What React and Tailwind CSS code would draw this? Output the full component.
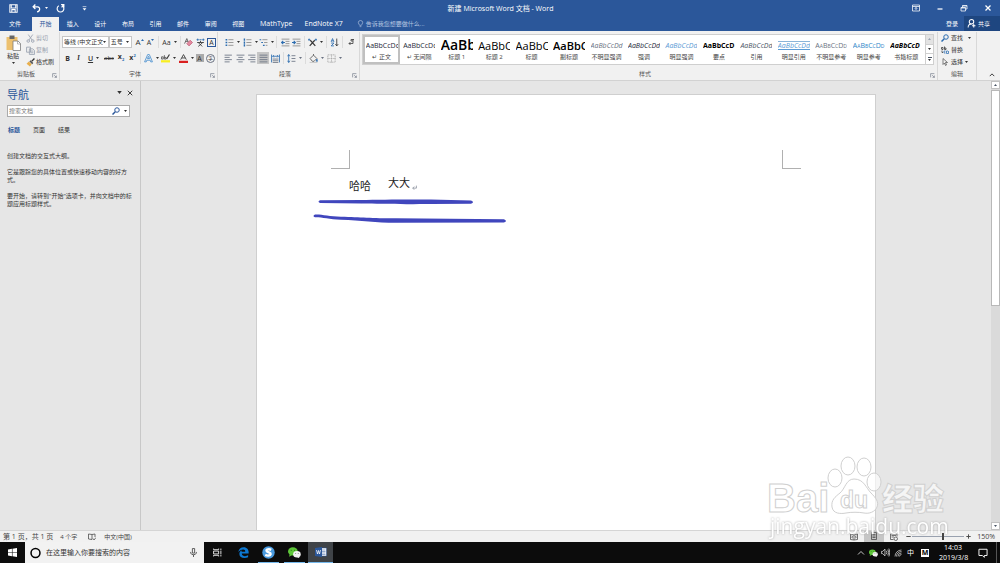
import React, { useState } from 'react';

const tabs = ['插入', '设计', '布局', '引用', '邮件', '审阅', '视图'];

const styleItems = [
  { name: '↵ 正文', preview: 'AaBbCcDd', className: 'text-[7px] text-gray-800' },
  { name: '↵ 无间隔', preview: 'AaBbCcDd', className: 'text-[7px] text-gray-800' },
  { name: '标题 1', preview: 'AaBb', className: 'text-[14px] font-semibold text-black' },
  { name: '标题 2', preview: 'AaBbC', className: 'text-[11px] text-black' },
  { name: '标题', preview: 'AaBbC', className: 'text-[11px] text-black' },
  { name: '副标题', preview: 'AaBbC', className: 'text-[11px] font-semibold text-black' },
  { name: '不明显强调', preview: 'AaBbCcDd', className: 'text-[7px] italic text-gray-500' },
  { name: '强调', preview: 'AaBbCcDd', className: 'text-[7px] italic text-gray-800' },
  { name: '明显强调', preview: 'AaBbCcDd', className: 'text-[7px] italic text-[#5b9bd5]' },
  { name: '要点', preview: 'AaBbCcD', className: 'text-[7px] font-bold text-black' },
  { name: '引用', preview: 'AaBbCcDd', className: 'text-[7px] italic text-gray-600' },
  { name: '明显引用', preview: 'AaBbCcDd', className: 'text-[7px] italic text-[#5b9bd5] underline border-t border-[#8ab4d8]' },
  { name: '不明显参考', preview: 'AaBbCcDd', className: 'text-[7px] text-gray-500 [font-variant:small-caps]' },
  { name: '明显参考', preview: 'AaBbCcDd', className: 'text-[7px] text-[#2e86c8] [font-variant:small-caps]' },
  { name: '书籍标题', preview: 'AaBbCcD', className: 'text-[7px] font-bold italic text-black' },
];

function Icon({ className = 'w-[9px] h-[9px]', children, ...rest }) {
  return (
    <svg
      viewBox="0 0 16 16"
      fill="none"
      stroke="currentColor"
      strokeWidth="1.5"
      className={`block shrink-0 ${className}`}
      {...rest}
    >
      {children}
    </svg>
  );
}

function Caret({ className = 'w-[3px] h-[2px]' }) {
  return (
    <svg viewBox="0 0 6 4" className={`block shrink-0 ${className}`} fill="currentColor">
      <path d="M0 0h6L3 4z" />
    </svg>
  );
}

function Tool({ label, width = 'w-[11px]', caret, active, children }) {
  return (
    <button
      aria-label={label}
      className={`flex h-[12px] shrink-0 items-center justify-center gap-[3px] ${width} ${active ? 'bg-[#c5c5c5]' : ''}`}
    >
      {children}
      {caret && <Caret />}
    </button>
  );
}

function Divider() {
  return <span className="mx-[2px] h-[12px] w-px shrink-0 bg-[#dcdcdc]" />;
}

function Group({ label, width, launcher = true, children }) {
  return (
    <section className={`flex flex-col border-r border-[#d8d8d8] ${width}`}>
      <div className="flex-1">{children}</div>
      <div className="flex h-[11px] items-center pb-px">
        <span className="flex-1 text-center text-[#555]">{label}</span>
        {launcher && (
          <button aria-label={`${label}设置`} className="pt-[3px] pr-[2px] text-gray-500">
            <Icon className="h-[5px] w-[5px]">
              <path d="M2 14V2h12M7 7l7 7M14 8v6H8" strokeWidth="2" />
            </Icon>
          </button>
        )}
      </div>
    </section>
  );
}

function TitleBar() {
  return (
    <header className="flex h-[16px] items-center bg-[#2b579a] text-white">
      <div className="flex flex-1 items-center pl-[9px]">
        <button aria-label="保存">
          <Icon>
            <path d="M1.5 1.5h13v13h-13zM4 2v5h8V2M5 14v-4h6v4" strokeWidth="1.8" />
          </Icon>
        </button>
        <button aria-label="撤消" className="ml-[14px] flex items-center gap-[4px]">
          <Icon>
            <path d="M6 1L2 5l4 4M2 5h8c5 0 5 8-1 9" strokeWidth="2.2" />
          </Icon>
          <Caret />
        </button>
        <button aria-label="恢复" className="ml-[8px]">
          <Icon>
            <path d="M5 3a6 6 0 1 0 6 0M9 1h5v5M13 2l-3 4" strokeWidth="2" />
          </Icon>
        </button>
        <button aria-label="自定义快速访问工具栏" className="ml-[17px]">
          <Icon className="h-[5px] w-[5px]">
            <path d="M2 2h12" strokeWidth="2" />
            <path d="M2 7h12l-6 7z" fill="currentColor" stroke="none" />
          </Icon>
        </button>
      </div>
      <h1 className="text-[7px]">新建 Microsoft Word 文档 - Word</h1>
      <div className="flex flex-1 items-center justify-end gap-[16px] pr-[8px]">
        <button aria-label="功能区显示选项">
          <Icon className="h-[8px] w-[8px]">
            <path d="M1 2h14v12H1zM1 5h14M8 12V7M5.500 9.500L8 7l2.500 2.500" />
          </Icon>
        </button>
        <button aria-label="最小化">
          <Icon className="h-[8px] w-[8px]">
            <path d="M3 10h10" strokeWidth="2.500" />
          </Icon>
        </button>
        <button aria-label="向下还原">
          <Icon className="h-[8px] w-[8px]">
            <path d="M2 7h9v7H2zM5 7V3h9v7h-3M5 4h9M2 8h9" />
          </Icon>
        </button>
        <button aria-label="关闭">
          <Icon className="h-[8px] w-[8px]">
            <path d="M3 3l10 10M13 3L3 13" strokeWidth="2.500" />
          </Icon>
        </button>
      </div>
    </header>
  );
}

function TabBar() {
  return (
    <nav className="flex h-[15px] items-stretch bg-[#2b579a] text-[6px] text-white">
      <button className="w-[32px] pr-[2px]">文件</button>
      <button className="mt-px w-[27px] bg-[#f1f1f1] text-[#2b579a]">开始</button>
      <div className="grid w-[193px] grid-cols-7">
        {tabs.map((tab) => (
          <button key={tab}>{tab}</button>
        ))}
      </div>
      <button className="ml-[8px] text-[7px]">MathType</button>
      <button className="ml-[12px] text-[7px]">EndNote X7</button>
      <button className="ml-[14px] flex items-center gap-[2px] text-[#b4c5e0]">
        <Icon className="h-[8px] w-[7px]">
          <path d="M6 11c0-2-3-3-3-6a5 5 0 0 1 10 0c0 3-3 4-3 6zM6 14h4" />
        </Icon>
        告诉我您想要做什么...
      </button>
      <button className="ml-auto pr-[6px]">登录</button>
      <button className="flex w-[36px] items-center gap-[2px] bg-[#1e4680] pl-[3px]">
        <Icon>
          <circle cx="8" cy="5" r="4" strokeWidth="1.8" />
          <path d="M2 15c0-4 3-6 6-6M12 9v6M9 12h6" strokeWidth="1.8" />
        </Icon>
        共享
      </button>
    </nav>
  );
}

function ClipboardGroup() {
  return (
    <Group label="剪贴板" width="w-[60px]">
      <div className="flex">
        <button className="flex w-[26px] flex-col items-center pt-[3px]">
          <svg viewBox="0 0 30 32" className="h-[16px] w-[15px]">
            <path d="M1 4h22v26H1z" fill="#ecc06f" />
            <path d="M7 1h10v7H7z" fill="#666" />
            <path d="M14 12h10l5 5v14H14z" fill="#fff" stroke="#777" strokeWidth="1.500" />
            <path d="M23 12v6h6" fill="none" stroke="#777" />
          </svg>
          <span className="mt-[2px] mb-[3px]">粘贴</span>
          <Caret />
        </button>
        <div className="flex flex-col">
          <button className="flex h-[12px] items-center gap-[1px] text-gray-400" disabled>
            <Icon>
              <path d="M4 1l7 10M12 1L5 11" />
              <circle cx="4" cy="12.500" r="2.300" />
              <circle cx="12" cy="12.500" r="2.300" />
            </Icon>
            剪切
          </button>
          <button className="flex h-[12px] items-center gap-[1px] text-gray-400" disabled>
            <Icon>
              <path d="M1 2h7v9H1zM6 5h6l3 3v7H6zM8 9h5M8 12h5" />
            </Icon>
            复制
          </button>
          <button className="flex h-[12px] items-center gap-[1px]">
            <Icon>
              <path d="M15 1l-5 5" strokeWidth="2.500" />
              <path d="M8 4l5 5-2 2-5-5z" fill="#555" stroke="none" />
              <path d="M5 6l5 5-3 4-6-5z" fill="#e8ae4a" stroke="none" />
            </Icon>
            格式刷
          </button>
        </div>
      </div>
    </Group>
  );
}

function SelectBox({ label, value, width }) {
  return (
    <label className={`relative flex h-[12px] items-center border border-[#c6c6c6] bg-white ${width}`}>
      <select aria-label={label} className="h-full w-full appearance-none truncate pr-[5px] pl-px text-[6px] outline-none [text-overflow:clip]">
        <option>{value}</option>
      </select>
      <span className="pointer-events-none absolute right-[2px]">
        <Caret />
      </span>
    </label>
  );
}

function FontGroup() {
  return (
    <Group label="字体" width="w-[158px]">
      <div className="flex items-center pt-[4px] pl-[2px]">
        <SelectBox label="字体" value="等线 (中文正文" width="w-[48px]" />
        <SelectBox label="字号" value="五号" width="w-[24px]" />
        <Tool label="增大字号" width="ml-[2px] w-[11px]">
          <span className="text-[8px]">A</span>
          <Caret className="-ml-[3px] mb-[5px] h-[2px] w-[3px] rotate-180 text-[#2b6cb0]" />
        </Tool>
        <Tool label="减小字号">
          <span className="text-[7px]">A</span>
          <Caret className="-ml-[3px] mb-[5px] h-[2px] w-[3px] text-[#2b6cb0]" />
        </Tool>
        <Divider />
        <Tool label="更改大小写" width="w-[17px]" caret>
          <span className="text-[7px]">Aa</span>
        </Tool>
        <Divider />
        <Tool label="清除所有格式">
          <Icon>
            <path d="M1 10L5 1l3 7M3 6h4" stroke="#555" />
            <path d="M11 4l4 4-6 6-4-4z" fill="#e58ba0" stroke="#c4627c" />
          </Icon>
        </Tool>
        <Tool label="拼音指南" width="w-[12px]">
          <Icon>
            <path d="M1 3h4M6 3h4M11 3h4M3 1v4M13 1v4" stroke="#2b6cb0" />
            <path d="M8 5v3M2 8h12M4 8l7 7M12 8l-8 7" />
          </Icon>
        </Tool>
        <Tool label="字符边框">
          <span className="flex h-[9px] w-[9px] items-center justify-center border border-[#2b579a] text-[7px]">A</span>
        </Tool>
      </div>
      <div className="flex items-center pt-[4px] pl-[2px] text-[7px]">
        <Tool label="加粗"><b>B</b></Tool>
        <Tool label="倾斜"><i className="font-serif font-semibold">I</i></Tool>
        <Tool label="下划线" width="w-[19px]" caret><span className="font-semibold underline">U</span></Tool>
        <Tool label="删除线" width="w-[12px]"><s className="text-[6px]">abc</s></Tool>
        <Tool label="下标" width="w-[12px]">
          <span className="font-bold">x<span className="align-sub text-[4px] text-[#2b6cb0]">2</span></span>
        </Tool>
        <Tool label="上标">
          <span className="font-bold">x<span className="align-super text-[4px] text-[#2b6cb0]">2</span></span>
        </Tool>
        <Divider />
        <Tool label="文本效果" width="w-[16px]" caret>
          <Icon>
            <path d="M1 14L6.500 1h3L15 14h-3l-1-3H5l-1 3zM6 8h4L8 4z" stroke="#4a90d0" />
          </Icon>
        </Tool>
        <Tool label="突出显示" width="w-[18px]" caret>
          <Icon>
            <path d="M0 11h16v4H0z" fill="#f8ee20" stroke="none" />
            <path d="M1 9V5h3v4zM6 2v7h3V6H6" strokeWidth="1.200" />
            <path d="M15 1l-5 8" strokeWidth="2" />
          </Icon>
        </Tool>
        <Tool label="字体颜色" width="w-[18px]" caret>
          <Icon>
            <path d="M3 10L8 1l5 9M5 7h6" />
            <path d="M0 12h16v4H0z" fill="#d92020" stroke="none" />
          </Icon>
        </Tool>
        <Tool label="字符底纹" width="w-[9px]">
          <span className="flex h-[8px] w-[8px] items-center justify-center bg-[#aaa]">A</span>
        </Tool>
        <Tool label="带圈字符" width="w-[13px]">
          <span className="flex h-[9px] w-[9px] items-center justify-center rounded-full border border-gray-500 text-[5px]">字</span>
        </Tool>
      </div>
    </Group>
  );
}

function ListIcon({ dots }) {
  return (
    <Icon>
      <path d="M6 3h9M6 8h9M6 13h9" stroke="#888" />
      <path d={dots} stroke="#2b6cb0" strokeWidth="2.500" />
    </Icon>
  );
}

function ParagraphGroup() {
  return (
    <Group label="段落" width="w-[142px]">
      <div className="flex items-center pt-[4px] pl-[5px]">
        <Tool label="项目符号" width="w-[18px]" caret><ListIcon dots="M1 3h3M1 8h3M1 13h3" /></Tool>
        <Tool label="编号" width="w-[18px]" caret><ListIcon dots="M2.500 1v4M2.500 6v4M2.500 11v4" /></Tool>
        <Tool label="多级列表" width="w-[15px]" caret>
          <Icon>
            <path d="M1 3h3M4 8h3M7 13h3" stroke="#2b6cb0" strokeWidth="2" />
            <path d="M6 3h9M9 8h6M12 13h3" stroke="#888" />
          </Icon>
        </Tool>
        <Divider />
        <Tool label="减少缩进量" width="w-[12px]">
          <Icon>
            <path d="M1 2h14M8 6h7M8 10h7M1 14h14" stroke="#888" />
            <path d="M7 8H1M4 5L1 8l3 3" stroke="#2b6cb0" strokeWidth="2" />
          </Icon>
        </Tool>
        <Tool label="增加缩进量">
          <Icon>
            <path d="M1 2h14M8 6h7M8 10h7M1 14h14" stroke="#888" />
            <path d="M0 8h6M3 5l3 3-3 3" stroke="#2b6cb0" strokeWidth="2" />
          </Icon>
        </Tool>
        <Divider />
        <Tool label="中文版式" width="w-[17px]" caret>
          <Icon>
            <path d="M3 14L12 4M13 14L4 4" strokeWidth="2" />
            <path d="M0 3h4M12 3h4M2 1v4M14 1v4" stroke="#2b6cb0" />
          </Icon>
        </Tool>
        <Divider />
        <Tool label="排序">
          <Icon>
            <path d="M2 7L4.500 1 7 7M3 5h3M2 9h5l-5 5h5" stroke="#2b6cb0" />
            <path d="M12 1v13M9.500 11l2.500 3 2.500-3" />
          </Icon>
        </Tool>
        <Divider />
        <Tool label="显示编辑标记">
          <Icon className="h-[8px] w-[8px]">
            <path d="M12 2v9H4M7 8l-3 3 3 3M8 3h6M8 3v3h4" />
          </Icon>
        </Tool>
      </div>
      <div className="flex items-center pt-[4px] pl-[5px] text-gray-500">
        <Tool label="左对齐"><Icon><path d="M1 2h13M1 6h9M1 10h13M1 14h9" /></Icon></Tool>
        <Tool label="居中" width="w-[12px]"><Icon><path d="M1 2h14M4 6h8M1 10h14M4 14h8" /></Icon></Tool>
        <Tool label="右对齐"><Icon><path d="M2 2h13M6 6h9M2 10h13M6 14h9" /></Icon></Tool>
        <Tool label="两端对齐" width="w-[12px]" active><Icon><path d="M1 2h14M1 6h14M1 10h14M1 14h14" /></Icon></Tool>
        <Tool label="分散对齐" width="w-[12px]">
          <Icon>
            <path d="M1 1v14M15 1v14M3 4h10M5 2L3 4l2 2M11 2l2 2-2 2" stroke="#2b6cb0" />
            <path d="M3 9h10M3 12h10M3 15h10" />
          </Icon>
        </Tool>
        <Divider />
        <Tool label="行距" width="w-[17px]" caret>
          <Icon>
            <path d="M3 1v14M1 4l2-3 2 3M1 12l2 3 2-3" stroke="#2b6cb0" />
            <path d="M8 3h7M8 8h7M8 13h7" />
          </Icon>
        </Tool>
        <Divider />
        <Tool label="底纹" width="w-[17px]" caret>
          <Icon>
            <path d="M2 8l6-6 6 6-5 5H6zM8 2V0" stroke="#555" />
            <path d="M14 9l1 4h-2z" stroke="#2b6cb0" />
            <path d="M1 15h14" strokeWidth="2" stroke="#ccc" />
          </Icon>
        </Tool>
        <Tool label="边框" width="w-[18px]" caret>
          <Icon><path d="M1.500 1.500h13v13h-13zM8 1v14M1 8h14" stroke="#aaa" strokeDasharray="2 1" /></Icon>
        </Tool>
      </div>
    </Group>
  );
}

function StylesGroup() {
  const [selected, setSelected] = useState(0);

  return (
    <Group label="样式" width="min-w-0 flex-1">
      <div className="mt-[2px] mr-[3px] ml-[2px] flex h-[31px] border border-[#cfcfcf] bg-white">
        <div className="grid min-w-0 flex-1 grid-cols-15">
          {styleItems.map((item, i) => (
            <button
              key={item.name}
              onClick={() => setSelected(i)}
              className={`flex min-w-0 flex-col items-center border-2 ${selected === i ? 'border-[#c0c0c0]' : 'border-transparent'}`}
            >
              <span className="flex h-[16px] w-[32px] items-center overflow-hidden">
                <span className={`whitespace-nowrap ${item.className}`}>{item.preview}</span>
              </span>
              <span className="mt-px whitespace-nowrap text-[#444]">{item.name}</span>
            </button>
          ))}
        </div>
        <div className="grid w-[8px] grid-rows-3 divide-y divide-[#cfcfcf] border-l border-[#cfcfcf]">
          <button aria-label="上一行" className="flex items-center justify-center bg-[#e3e3e3] text-gray-400">
            <Caret className="h-[2px] w-[3px] rotate-180" />
          </button>
          <button aria-label="下一行" className="flex items-center justify-center"><Caret /></button>
          <button aria-label="其他" className="flex flex-col items-center justify-center gap-px">
            <span className="h-px w-[4px] bg-gray-600" />
            <Caret />
          </button>
        </div>
      </div>
    </Group>
  );
}

function EditGroup() {
  return (
    <Group label="编辑" width="w-[39px]" launcher={false}>
      <div className="flex flex-col items-start pl-[3px]">
        <button className="flex h-[12px] items-center gap-[2px]">
          <Icon className="h-[8px] w-[8px] text-[#2b6cb0]">
            <circle cx="10" cy="6" r="4.500" strokeWidth="2" />
            <path d="M6.500 9.500L1 15" strokeWidth="3" />
          </Icon>
          查找
          <span className="pl-[3px]"><Caret /></span>
        </button>
        <button className="flex h-[12px] items-center gap-[2px]">
          <Icon className="h-[8px] w-[8px]">
            <path d="M1 6V3h3v4H1M7 1v6h3V4H7" />
            <path d="M9 10H6v4h3M14 10h-3v5h4v-5" stroke="#2b6cb0" />
            <path d="M2 9v4h2" />
          </Icon>
          替换
        </button>
        <button className="flex h-[12px] items-center gap-[2px]">
          <Icon className="h-[8px] w-[8px]">
            <path d="M4 1v12l3-3 2 5 2-1-2-5h4z" strokeWidth="1.200" />
          </Icon>
          选择
          <Caret />
        </button>
      </div>
    </Group>
  );
}

function Ribbon() {
  return (
    <div className="flex h-[50px] border-b border-[#d2d2d2] bg-[#f1f1f1] pt-px text-[6px] text-[#333]">
      <ClipboardGroup />
      <FontGroup />
      <ParagraphGroup />
      <StylesGroup />
      <EditGroup />
      <button aria-label="折叠功能区" className="w-[23px] self-end pb-[2px] pl-[12px]">
        <Icon className="h-[6px] w-[6px]"><path d="M2 11l6-6 6 6" strokeWidth="2.500" /></Icon>
      </button>
    </div>
  );
}

function NavigationPane() {
  return (
    <aside className="w-[141px] shrink-0 border-r border-[#c8c8c8] px-[7px] pt-[6px] text-[6px] text-[#333]">
      <div className="flex h-[14px] items-center">
        <h2 className="flex-1 text-[11px] text-[#2b579a]">导航</h2>
        <div className="flex items-center gap-[5px] pb-[3px]">
          <button aria-label="任务窗格选项"><Caret className="h-[3px] w-[5px]" /></button>
          <button aria-label="关闭导航">
            <Icon className="h-[6px] w-[6px]"><path d="M2 2l12 12M14 2L2 14" strokeWidth="2.500" /></Icon>
          </button>
        </div>
      </div>
      <div className="mt-[4px] mr-[3px] flex h-[12px] items-center border border-[#ababab] bg-white pr-[2px]">
        <input
          aria-label="搜索文档"
          placeholder="搜索文档"
          className="h-full min-w-0 flex-1 pl-px outline-none placeholder:text-[#777]"
        />
        <button aria-label="搜索" className="text-[#2b579a]">
          <Icon className="h-[8px] w-[8px]">
            <circle cx="10" cy="6" r="4.500" strokeWidth="2" />
            <path d="M6.500 9.500L1 15" strokeWidth="3" />
          </Icon>
        </button>
        <button aria-label="搜索选项" className="pl-[4px]"><Caret /></button>
      </div>
      <div className="mt-[10px] flex gap-[13px] pl-px">
        <button className="font-bold text-[#2b579a]">标题</button>
        <button>页面</button>
        <button>结果</button>
      </div>
      <div className="mt-[19px] flex flex-col gap-[8px] leading-[8px]">
        <p>创建文档的交互式大纲。</p>
        <p>它是跟踪您的具体位置或快速移动内容的好方式。</p>
        <p>要开始，请转到"开始"选项卡，并向文档中的标题应用标题样式。</p>
      </div>
    </aside>
  );
}

function DocumentPage() {
  return (
    <div className="relative mx-auto mt-[13px] w-[620px] max-w-full flex-1 border border-b-0 border-[#cfcfcf] bg-white">
      <div className="flex justify-between px-[74px] pt-[55px]">
        <span className="h-[19px] w-[19px] border-r border-b border-[#b0b0b0]" />
        <span className="h-[19px] w-[19px] border-b border-l border-[#b0b0b0]" />
      </div>
      <p className="flex px-[92px] pt-[8px] text-[11px] text-[#222]">
        <span className="mt-[3px]">哈哈</span>
        <span className="ml-[17px]">大大</span>
        <Icon className="mt-[8px] ml-[2px] h-[5px] w-[5px] text-gray-500">
          <path d="M14 2v8H3M7 5l-5 5 5 5" strokeWidth="2" />
        </Icon>
      </p>
      {/* pen strokes drawn over the text */}
      <svg viewBox="0 0 200 30" className="absolute top-[102px] left-[54px] h-[30px] w-[200px]" fill="#4046bd">
        <path d="M9 3.200L50 3C70 2.500 105 2.200 120 2.600L160 3.400Q164 5 160 6.800L120 7C100 7.300 70 7.200 50 6.600L9 6Q6 4.600 9 3.200z" />
        <path d="M4 17.500C10 17 18 19.500 30 19.700C50 20 60 21.300 85 21.300L193 22.200Q197 24 193 25.600L85 25.800C65 25.800 50 23.500 30 22.800C18 22.300 10 20 4 20.300Q1 19 4 17.500z" />
      </svg>
    </div>
  );
}

function ScrollBar() {
  return (
    <div className="flex w-[9px] shrink-0 flex-col bg-[#dadada] text-gray-600">
      <button aria-label="向上滚动" className="flex h-[8px] items-center justify-center border border-[#c2c2c2] bg-white">
        <Caret className="h-[2px] w-[3px] rotate-180" />
      </button>
      <div className="flex-1 pt-px">
        <div className="h-1/2 border border-[#b8b8b8] bg-white" />
      </div>
      <button aria-label="向下滚动" className="flex h-[8px] items-center justify-center border border-[#c2c2c2] bg-white">
        <Caret />
      </button>
    </div>
  );
}

function StatusBar() {
  const [zoom, setZoom] = useState(60);

  return (
    <footer className="flex h-[12px] items-center border-t border-[#d5d5d5] bg-[#f1f1f1] pr-[5px] pl-[3px] text-[6px] text-[#444]">
      <span className="text-[7px]">第 1 页，共 1 页</span>
      <span className="ml-[7px]">4 个字</span>
      <button aria-label="校对" className="ml-[11px]">
        <Icon className="h-[8px] w-[8px]">
          <path d="M8 3L1 2v10l7 1V3l6-1v6M10 11l2 3 4-5" />
        </Icon>
      </button>
      <span className="ml-[8px]">中文(中国)</span>
      <div className="ml-auto flex items-center self-stretch">
        <button aria-label="阅读视图" className="flex w-[20px] justify-center">
          <Icon className="h-[8px] w-[8px]"><path d="M8 4L1 2v11l7 1 7-1V2zM8 4v10M3 6l3 1M3 9l3 1M10 7l3-1M10 10l3-1" /></Icon>
        </button>
        <button aria-label="页面视图" className="flex w-[20px] justify-center self-stretch bg-[#c6c6c6] pt-px">
          <Icon className="h-[8px] w-[8px]"><path d="M3 1h10v14H3zM5 5h6M5 8h6M5 11h6" /></Icon>
        </button>
        <button aria-label="Web 版式视图" className="flex w-[20px] justify-center">
          <Icon className="h-[8px] w-[8px]"><path d="M7 13H1V2h13v5M3 5h9M3 8h5" /><circle cx="11.500" cy="11.500" r="3.500" /></Icon>
        </button>
        <button aria-label="缩小" className="flex w-[8px] justify-center">
          <Icon className="h-[5px] w-[5px]"><path d="M1 8h14" strokeWidth="3" /></Icon>
        </button>
        <input
          type="range"
          aria-label="缩放"
          value={zoom}
          onChange={(e) => setZoom(e.target.value)}
          className="h-px w-[52px] appearance-none bg-gray-400 [&::-webkit-slider-thumb]:h-[7px] [&::-webkit-slider-thumb]:w-[2px] [&::-webkit-slider-thumb]:appearance-none [&::-webkit-slider-thumb]:bg-[#444]"
        />
        <button aria-label="放大" className="flex w-[8px] justify-center">
          <Icon className="h-[5px] w-[5px]"><path d="M1 8h14M8 1v14" strokeWidth="3" /></Icon>
        </button>
      </div>
      <span className="ml-[5px] text-[7px]">150%</span>
    </footer>
  );
}

function WeChatIcon({ className }) {
  return (
    <svg viewBox="0 0 24 20" className={`block ${className}`}>
      <ellipse cx="9" cy="8" rx="9" ry="7.500" fill="#5ec639" />
      <path d="M3 13l-1 5 5-3z" fill="#5ec639" />
      <ellipse cx="16.500" cy="13" rx="7" ry="6" fill="#f2f2f2" />
      <path d="M20 17l1 3-4-1z" fill="#f2f2f2" />
      <path d="M6 5v2M12 5v2" stroke="#246b10" strokeWidth="1.500" />
      <path d="M14 11v1.500M19 11v1.500" stroke="#555" strokeWidth="1.300" />
    </svg>
  );
}

function TaskBar() {
  return (
    <div className="flex h-[21px] items-stretch bg-[#0c0c0c] text-white">
      <button aria-label="开始菜单" className="flex w-[25px] items-center justify-center">
        <svg viewBox="0 0 16 16" className="h-[9px] w-[9px]" fill="#fff">
          <path d="M0 2.500l7-1v6H0zM8 1.300L16 0v7.500H8zM0 8.500h7v6l-7-1zM8 8.500h8V16l-8-1.300z" />
        </svg>
      </button>
      <div className="flex w-[179px] items-center gap-[5px] bg-[#f2f2f2] pr-[6px] pl-[5px] text-black">
        <Icon className="h-[12px] w-[11px]"><circle cx="8" cy="8" r="6.500" strokeWidth="2.200" /></Icon>
        <input
          aria-label="任务栏搜索"
          placeholder="在这里输入你要搜索的内容"
          className="min-w-0 flex-1 text-[7px] outline-none placeholder:text-[#333]"
        />
        <button aria-label="语音">
          <Icon className="h-[9px] w-[9px] text-[#444]">
            <path d="M6 1h4v8H6zM3 7v2q1 3 5 3t5-3V7M8 12v4" />
          </Icon>
        </button>
      </div>
      <button aria-label="任务视图" className="flex w-[26px] items-center justify-center">
        <Icon className="h-[9px] w-[9px]"><path d="M1 1v2h9V1M1 5.500h9v5H1zM1 15v-2h9v2M14 1v3M14 12v3M14 5v6" /></Icon>
      </button>
      <button aria-label="Microsoft Edge" className="flex w-[26px] items-center justify-center">
        <svg viewBox="0 0 16 16" className="h-[11px] w-[11px]" fill="#0d78d2">
          <path d="M0.500 7.500C1 3 4 0.500 8.300 0.500C13 0.500 15.500 4 15.500 7.800v1.700H5.500c0 3 2.500 3.800 4.700 3.800c1.800 0 3.300-.5 4.500-1.200v2.900c-1.500.7-3.200 1-5.200 1C5 16 2 13.500 2 10c0-2.300 1.200-4.200 3.500-5.300C4.700 5.500 5.400 6 5.300 7h5.200c.2-2-.9-3.200-2.900-3.200C4.700 3.800 2 5 .5 7.500z" />
        </svg>
      </button>
      <button aria-label="搜狗浏览器" className="mx-[2px] flex w-[21px] items-center justify-center border-b border-[#76b9ed]">
        <svg viewBox="0 0 24 24" className="h-[13px] w-[13px]">
          <circle cx="12" cy="12" r="11.500" fill="#4a9be0" />
          <path d="M17 7c-4-2-9.500-1-8.500 2s8 3 7.500 6-6 3.500-10 1.500" fill="none" stroke="#fff" strokeWidth="4.500" />
        </svg>
      </button>
      <button aria-label="微信" className="mx-[3px] flex w-[21px] items-center justify-center border-b border-[#76b9ed]">
        <WeChatIcon className="h-[11px] w-[13px]" />
      </button>
      <button aria-label="Word" className="flex w-[25px] items-center justify-center border-b border-[#76b9ed] bg-[#3f4347]">
        <svg viewBox="0 0 24 20" className="h-[10px] w-[12px]">
          <path d="M12 2h11v16H12z" fill="#fff" stroke="#2b579a" />
          <path d="M14 6h7M14 9h7M14 12h7M14 15h7" stroke="#2b579a" />
          <path d="M0 2l14-2v20L0 18z" fill="#2b579a" />
          <path d="M3 6l2 8 2-7 2 7 2-8" fill="none" stroke="#fff" strokeWidth="1.500" />
        </svg>
      </button>
      <div className="ml-auto flex items-center text-[7px]">
        <button aria-label="显示隐藏的图标" className="mr-[4px]">
          <Icon className="h-[8px] w-[8px]"><path d="M2 11l6-6 6 6" /></Icon>
        </button>
        <WeChatIcon className="h-[8px] w-[9px]" />
        <Icon className="ml-[3px] h-[9px] w-[9px]"><path d="M1 6h2l4-4v12l-4-4H1zM9.500 5q2 3 0 6M12 3q3.500 5 0 10M14 1q3.500 7 0 14" strokeWidth="1.200" /></Icon>
        <Icon className="ml-[4px] h-[8px] w-[8px]"><path d="M2 15A13 13 0 0 1 15 2M5 15A10 10 0 0 1 15 5M8 15a7 7 0 0 1 7-7M11 15a4 4 0 0 1 4-4" strokeWidth="1.200" /></Icon>
        <span className="ml-[5px]">中</span>
        <span className="ml-[7px] flex h-[8px] w-[8px] items-center justify-center bg-white text-[7px] font-bold text-black">M</span>
        <div className="ml-[10px] w-[28px] text-center leading-[10px] whitespace-nowrap">
          <div>14:03</div>
          <div>2019/3/8</div>
        </div>
        <button aria-label="通知" className="ml-[11px]">
          <Icon className="h-[10px] w-[10px]"><path d="M1.500 2h13v10H10v3l-3-3H1.500z" /></Icon>
        </button>
        <span className="ml-[8px] h-[21px] w-px bg-[#555]" />
        <span className="w-[3px]" />
      </div>
    </div>
  );
}

function Watermark() {
  return (
    <svg
      viewBox="0 0 186 92"
      className="pointer-events-none absolute right-[50px] bottom-[18px] h-[92px] w-[186px]"
      fill="#fff"
      fillOpacity="0.65"
      stroke="#d0d0d0"
      strokeWidth="1"
    >
      <g className="font-['Liberation_Sans','Noto_Sans_CJK_SC',sans-serif] font-bold">
        <text x="3" y="59" fontSize="40">Bai</text>
        <ellipse cx="71" cy="25" rx="7" ry="9" />
        <ellipse cx="84" cy="13" rx="7" ry="9" />
        <ellipse cx="100" cy="14" rx="7" ry="9" />
        <ellipse cx="110" cy="29" rx="7" ry="9" />
        <path d="M90 26c10 0 12 9 17 14s8 9 6 14-8 7-13 6-13-1-18 0-13 1-14-6 3-10 8-14 6-14 14-14z" />
        <text x="76" y="55" fontSize="23">du</text>
        <text x="118" y="57" fontSize="31" className="font-black">经验</text>
      </g>
      <text
        x="6"
        y="81"
        fontSize="21"
        stroke="none"
        fillOpacity="1"
        className="font-['Open_Sans',sans-serif] [filter:drop-shadow(0_0_1px_#aaa)]"
      >
        jingyan.baidu.com
      </text>
    </svg>
  );
}

export default function App() {
  return (
    <div className="relative flex h-screen flex-col overflow-hidden bg-[#e6e6e6] font-['Open_Sans','Noto_Sans_CJK_SC',sans-serif] leading-none">
      <TitleBar />
      <TabBar />
      <Ribbon />
      <main className="flex min-h-0 flex-1">
        <NavigationPane />
        <div className="flex min-w-0 flex-1 flex-col">
          <DocumentPage />
        </div>
        <ScrollBar />
      </main>
      <StatusBar />
      <TaskBar />
      <Watermark />
    </div>
  );
}
